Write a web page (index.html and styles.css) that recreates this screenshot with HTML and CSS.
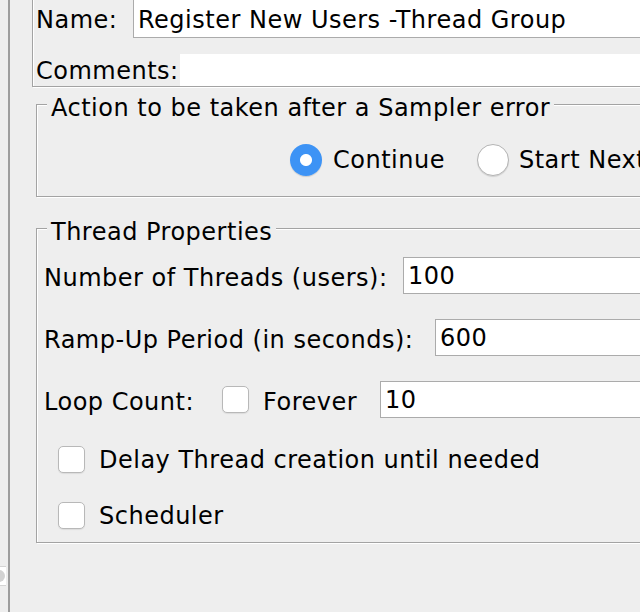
FILE: index.html
```html
<!DOCTYPE html>
<html lang="en">
<head>
<meta charset="utf-8">
<title>Thread Group</title>
<link rel="stylesheet" href="styles.css">
</head>
<body>
<div class="app">
  <div class="strip">
    <div class="knob"><span class="knob-dot"></span></div>
  </div>
  <div class="divider"></div>
  <main class="main">
    <section class="name-panel">
      <div class="row name-row">
        <span class="lbl name-lbl">Name:</span>
        <div class="field name-field">Register New Users -Thread Group</div>
      </div>
      <div class="row comments-row">
        <span class="lbl comments-lbl">Comments:</span>
        <div class="comments-field"></div>
      </div>
    </section>

    <fieldset class="group action-group">
      <legend>Action to be taken after a Sampler error</legend>
      <div class="radios">
        <span class="radio checked"></span><span class="opt">Continue</span>
        <span class="radio second"></span><span class="opt">Start Next Thread Loop</span>
      </div>
    </fieldset>

    <fieldset class="group thread-group">
      <legend>Thread Properties</legend>
      <div class="row field-row first">
        <span class="lbl threads-lbl">Number of Threads (users):</span>
        <div class="field">100</div>
      </div>
      <div class="row field-row">
        <span class="lbl ramp-lbl">Ramp-Up Period (in seconds):</span>
        <div class="field">600</div>
      </div>
      <div class="row field-row">
        <span class="lbl loop-lbl">Loop Count:</span>
        <span class="check"></span>
        <span class="forever">Forever</span>
        <div class="field">10</div>
      </div>
      <div class="row check-row delay">
        <span class="check"></span>
        <span class="check-text">Delay Thread creation until needed</span>
      </div>
      <div class="row check-row sched">
        <span class="check"></span>
        <span class="check-text">Scheduler</span>
      </div>
    </fieldset>
  </main>
</div>
</body>
</html>
```
FILE: styles.css
```css
* { box-sizing: border-box; }

html, body {
  margin: 0;
  padding: 0;
  background: #eeeeee;
}

body {
  font-family: "DejaVu Sans", "Liberation Sans", sans-serif;
  font-size: 24px;
  letter-spacing: 0.5px;
  color: #000;
  width: 640px;
  height: 612px;
  overflow: hidden;
}

.app {
  display: flex;
  height: 612px;
}

.strip {
  width: 8px;
  flex: none;
  display: flex;
  flex-direction: column;
  padding-top: 566px;
}

.knob {
  width: 6px;
  height: 20px;
  background: #fff;
  border-top: 1px solid #d4d4d4;
  border-bottom: 1px solid #d4d4d4;
  overflow: hidden;
}

.knob-dot {
  display: block;
  width: 12px;
  height: 12px;
  border-radius: 50%;
  background: #d2d2d2;
  margin: 3px 0 0 -7px;
}

.divider {
  width: 2px;
  flex: none;
  background: #9d9d9d;
}

.main {
  flex: 1;
  min-width: 0;
  padding-left: 22px;
  overflow: hidden;
}

.row {
  display: flex;
  align-items: center;
}

.lbl {
  flex: none;
  white-space: nowrap;
}

.field {
  flex: 1;
  min-width: 0;
  height: 37px;
  line-height: 33px;
  padding-top: 2px;
  background: #fff;
  border: 1px solid #ababab;
  padding-left: 4px;
  white-space: nowrap;
}

/* Name / Comments panel (top cut off) */
.name-panel {
  margin-top: -4px;
  margin-right: -20px;
  border: 1px solid #a3a3a3;
  box-shadow: inset 1px 1px 0 #fff, 1px 1px 0 #fff;
  padding: 2px 0 0 3px;
}

.name-row {
  height: 39px;
  align-items: baseline;
}
.name-lbl { width: 97px; }
.name-field {
  height: 39px;
  line-height: 35px;
  padding-top: 3px;
}

.comments-row {
  margin-top: 16px;
  height: 32px;
  align-items: stretch;
}
.comments-lbl {
  width: 144px;
  line-height: 34px;
}
.comments-field {
  flex: 1;
  background: #fff;
}

/* Titled groups */
.group {
  margin: 0 -20px 0 4px;
  border: 1px solid #a3a3a3;
  box-shadow: inset 1px 1px 0 #fff, 1px 1px 0 #fff;
  min-width: 0;
}

.group legend {
  padding: 8px 4px 0;
  line-height: 20px;
  background: #eeeeee;
  white-space: nowrap;
}

.action-group {
  margin-top: 3px;
  padding: 26px 0 20px 10px;
}

.radios {
  display: flex;
  align-items: center;
  padding-left: 243px;
  white-space: nowrap;
}

.radio {
  flex: none;
  width: 32px;
  height: 32px;
  border-radius: 50%;
  background: #fff;
  border: 1px solid #b4b4b4;
  box-shadow: 0 1px 1px rgba(0,0,0,0.12);
  margin-right: 11px;
}

.radio.checked {
  border: none;
  background: radial-gradient(circle, #fff 0 5.5px, #3d93f5 6.5px);
  box-shadow: 0 1px 1px rgba(0,0,0,0.15);
}

.radio.second { margin-left: 32px; margin-right: 10px; }

.thread-group {
  margin-top: 17px;
  padding: 15px 0 13px 7px;
}
.thread-group legend { margin-left: 3px; }

.field-row { height: 37px; margin-top: 25px; }
.field-row.first { margin-top: 0; }
.field-row .lbl,
.forever {
  padding-top: 4px;
}
.threads-lbl { width: 359px; }
.ramp-lbl { width: 391px; }
.loop-lbl { width: 178px; }

.check {
  flex: none;
  width: 27px;
  height: 27px;
  border-radius: 5px;
  background: #fff;
  border: 1px solid #b8b8b8;
  box-shadow: 0 1px 1px rgba(0,0,0,0.08);
}

.forever {
  width: 117px;
  margin-left: 14px;
}

.check-row { height: 27px; }
.check-row .check { margin-left: 14px; margin-right: 14px; }
.delay { margin-top: 28px; }
.sched { margin-top: 29px; }
```
